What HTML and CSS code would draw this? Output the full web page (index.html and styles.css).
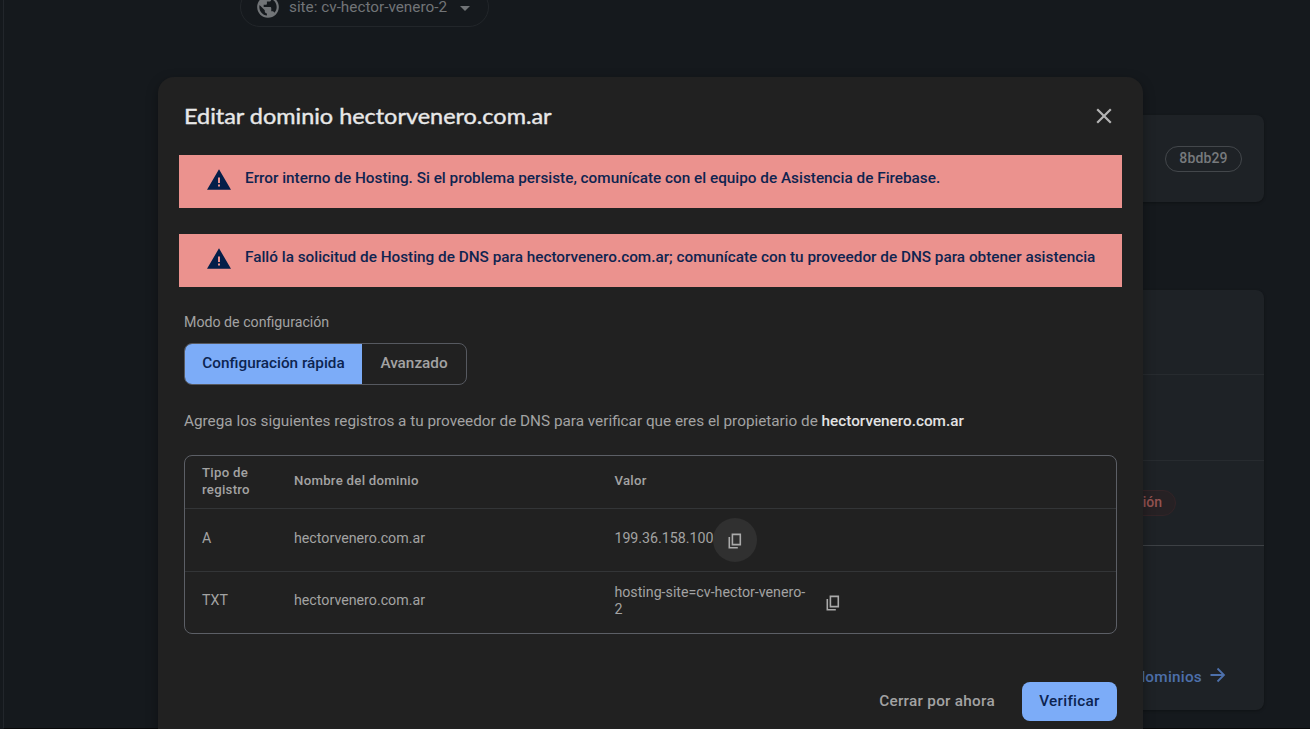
FILE: index.html
```html
<!DOCTYPE html>
<html lang="es">
<head>
<meta charset="utf-8">
<title>Editar dominio</title>
<link rel="stylesheet" href="styles.css">
</head>
<body>
<div class="page">
  <div class="site-select">
    <svg class="globe" viewBox="0 0 24 24"><path d="M12 2C6.480 2 2 6.480 2 12s4.480 10 10 10 10-4.480 10-10S17.520 2 12 2zm-1 17.930c-3.950-.490-7-3.850-7-7.930 0-.620.080-1.210.210-1.790L9 15v1c0 1.100.9 2 2 2v1.930zm6.900-2.540c-.260-.810-1-1.390-1.900-1.390h-1v-3c0-.550-.450-1-1-1H8v-2h2c.550 0 1-.450 1-1V7h2c1.100 0 2-.9 2-2v-.410c2.930 1.190 5 4.060 5 7.410 0 2.080-.8 3.970-2.100 5.390z"/></svg>
    <span class="site-name">site: cv-hector-venero-2</span>
    <i class="caret"></i>
  </div>
  <section class="card release"><span class="hash">8bdb29</span></section>
  <section class="card domains">
    <div class="row r1"></div>
    <div class="row r2"></div>
    <div class="row r3"><span class="status">Requiere configuración</span></div>
    <div class="more"><span>Ver todos los dominios</span><svg viewBox="0 0 16 16"><path d="M0.500 8H14M7.500 1.500L14 8L7.500 14.500"/></svg></div>
  </section>
</div>

<div class="dialog">
  <header class="head">
    <h1>Editar dominio hectorvenero.com.ar</h1>
    <svg class="close" viewBox="0 0 16 16"><path d="M1.200 1.200L14.800 14.800M14.800 1.200L1.200 14.800"/></svg>
  </header>
  <div class="alert">
    <svg viewBox="0 0 24 21"><path fill-rule="evenodd" d="M12 .3L24 20.700H0zM11 8.500v5.500h2V8.500zM11 15.500v2h2v-2z"/></svg>
    <p>Error interno de Hosting. Si el problema persiste, comunícate con el equipo de Asistencia de Firebase.</p>
  </div>
  <div class="alert">
    <svg viewBox="0 0 24 21"><path fill-rule="evenodd" d="M12 .3L24 20.700H0zM11 8.500v5.500h2V8.500zM11 15.500v2h2v-2z"/></svg>
    <p>Falló la solicitud de Hosting de DNS para hectorvenero.com.ar; comunícate con tu proveedor de DNS para obtener asistencia</p>
  </div>
  <div class="content">
    <div class="label">Modo de configuración</div>
    <div class="toggle"><span class="on">Configuración rápida</span><span class="off">Avanzado</span></div>
    <p class="info">Agrega los siguientes registros a tu proveedor de DNS para verificar que eres el propietario de <b>hectorvenero.com.ar</b></p>
    <div class="table">
      <div class="tr th"><span>Tipo de<br>registro</span><span>Nombre del dominio</span><span>Valor</span></div>
      <div class="tr a"><span>A</span><span>hectorvenero.com.ar</span><div class="val"><span>199.36.158.100</span><i class="copy hover"><svg viewBox="0 0 14 16"><path d="M4.400 1.400H12.300V11.600H4.400zM1.300 4V14.700H9.800"/></svg></i></div></div>
      <div class="tr txt"><span>TXT</span><span>hectorvenero.com.ar</span><div class="val"><span class="long">hosting-site=cv-hector-venero-<br>2</span><i class="copy"><svg viewBox="0 0 14 16"><path d="M4.400 1.400H12.300V11.600H4.400zM1.300 4V14.700H9.800"/></svg></i></div></div>
    </div>
    <div class="actions"><span class="later">Cerrar por ahora</span><span class="verify">Verificar</span></div>
  </div>
</div>
</body>
</html>
```
FILE: styles.css
```css
* { box-sizing: border-box; }
body { margin: 0; height: 729px; overflow: hidden; position: relative; background: #15191d; font-family: Roboto, sans-serif; color: #a3a3a3; }
h1, p { margin: 0; }
svg { display: block; flex: none; }

.page { height: 729px; margin-left: 3px; border-left: 1px solid #22262b; border-bottom: 1px solid #08090a; overflow: hidden; display: flex; flex-direction: column; }
.site-select { flex: none; width: 249px; height: 40px; margin: -13px 0 0 236px; border: 1px solid #22262a; border-radius: 20px; display: flex; align-items: center; padding-left: 13.5px; color: #717477; font-size: 15.3px; }
.globe { width: 26px; height: 26px; margin-top: -1px; fill: #717477; }
.site-name { margin-left: 8.5px; width: 159px; line-height: 14px; white-space: nowrap; }
.caret { margin: 2px 0 0 12px; border: 5px solid transparent; border-top-color: #717477; border-bottom: 0; }
.card { flex: none; margin-left: 236px; width: 1024px; background: #1e2226; border-radius: 8px; box-shadow: 0 1px 3px rgba(0, 0, 0, .3); }
.release { margin-top: 88px; height: 87px; display: flex; justify-content: flex-end; padding: 31px 22px 0 0; }
.hash { width: 77px; height: 26px; border: 1px solid #43474b; border-radius: 13px; text-align: center; font-size: 14px; font-weight: 500; line-height: 23px; color: #777a7d; letter-spacing: .15px; }
.domains { margin-top: 88px; height: 420px; }
.row { height: 85px; border-bottom: 1px solid #272b2f; }
.r2 { height: 86px; }
.r3 { border-color: #3d4145; display: flex; justify-content: flex-end; padding: 29px 88px 0 0; }
.status { height: 26px; border: 1px solid #332427; border-radius: 13px; background: #262124; padding: 0 13px; font-size: 14px; font-weight: 500; line-height: 23px; color: #935351; }
.more { display: flex; align-items: center; justify-content: flex-end; gap: 8px; padding: 120px 38px 0 0; color: #4d70ab; font-size: 15.3px; font-weight: 500; line-height: 22px; letter-spacing: .25px; }
.more svg { width: 16px; height: 16px; margin-top: -4px; fill: none; stroke: #4d70ab; stroke-width: 1.800; }

.dialog { position: absolute; left: 158px; top: 77px; width: 985px; height: 652px; background: #212121; border-radius: 16px 16px 0 0; box-shadow: 0 4px 12px rgba(0, 0, 0, .35); }
.head { height: 78px; display: flex; align-items: center; justify-content: space-between; padding: 0 31px 0 25.5px; }
h1 { font-family: Lato, sans-serif; font-weight: 400; font-size: 22px; line-height: 28px; color: #e8e8e8; transform: scaleX(1.065); transform-origin: left; -webkit-text-stroke: .4px #e8e8e8; }
.close { width: 16px; height: 16px; fill: none; stroke: #b4b4b4; stroke-width: 2.200; }
.alert { margin: 0 21px 26px; height: 53px; background: #eb928e; display: flex; align-items: flex-start; padding: 14px 0 0 28px; gap: 14px; }
.alert svg { width: 24px; height: 21px; fill: #041e49; }
.alert p { margin-top: 1px; color: #0f2450; font-size: 15.320px; font-weight: 500; line-height: 17px; white-space: nowrap; }
.content { padding: 1px 26px 0; }
.label { font-size: 14.2px; line-height: 16px; }
.toggle { margin-top: 13px; width: 283px; height: 42px; border: 1px solid #565960; border-radius: 8px; overflow: hidden; display: flex; font-size: 15.3px; font-weight: 500; line-height: 38px; text-align: center; }
.on { width: 177px; background: #7cacf8; color: #0c2451; }
.off { flex: 1; }
.info { margin-top: 26px; font-size: 15.300px; line-height: 20px; white-space: nowrap; }
.info b { font-weight: 500; color: #e3e3e3; }
.table { margin-top: 24px; width: 933px; height: 179px; border: 1px solid #5c5f66; border-radius: 8px; font-size: 14.230px; line-height: 17px; }
.tr { display: grid; grid-template-columns: 92px 320.400px 1fr; align-items: center; padding-left: 17px; white-space: nowrap; }
.th { height: 53px; border-bottom: 1px solid #333537; font-size: 13.200px; font-weight: 500; padding-bottom: 2px; letter-spacing: .28px; }
.th span + span { margin-top: -1px; }
.a { height: 63px; border-bottom: 1px solid #333537; padding-bottom: 3px; }
.txt { height: 61px; padding-bottom: 5px; }
.val { display: flex; align-items: center; }
.val > span { width: 99px; }
.val .long { width: 197px; margin-top: 2px; }
.copy { width: 44px; height: 44px; margin: 3px 0 0; border-radius: 22px; display: flex; align-items: center; justify-content: center; }
.txt .copy { margin-top: 4px; }
.copy.hover { background: #303030; }
.copy svg { width: 14px; height: 16px; margin-top: 2px; fill: none; stroke: #aaa; stroke-width: 1.600; }
.actions { margin-top: 48px; display: flex; justify-content: flex-end; align-items: center; gap: 27px; font-size: 15.300px; font-weight: 500; line-height: 38px; letter-spacing: .27px; }
.later { margin-top: -1px; }
.verify { width: 95px; height: 39px; border-radius: 8px; background: #7cacf8; color: #0c2451; text-align: center; }
```
